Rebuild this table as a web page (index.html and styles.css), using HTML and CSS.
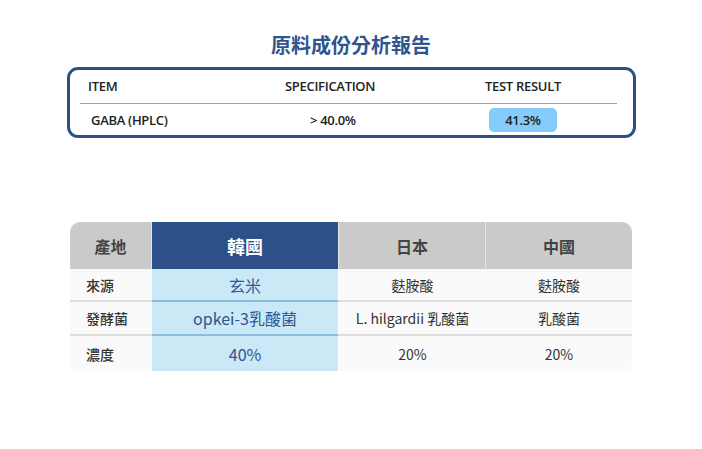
FILE: index.html
```html
<!DOCTYPE html>
<html lang="zh-Hant">
<head>
<meta charset="utf-8">
<link rel="stylesheet" href="styles.css">
</head>
<body>
<div class="page">
  <h1 class="title">原料成份分析報告</h1>
  <div class="report">
    <div class="rrow rhead">
      <div class="c1">ITEM</div>
      <div class="c2">SPECIFICATION</div>
      <div class="c3">TEST RESULT</div>
    </div>
    <div class="rule"></div>
    <div class="rrow rbody">
      <div class="c1">GABA (HPLC)</div>
      <div class="c2">&gt; 40.0%</div>
      <div class="c3"><span class="badge">41.3%</span></div>
    </div>
  </div>

  <div class="compare">
    <div class="cell h first">產地</div>
    <div class="cell h kr">韓國</div>
    <div class="cell h">日本</div>
    <div class="cell h last">中國</div>

    <div class="cell lbl">來源</div>
    <div class="cell krb">玄米</div>
    <div class="cell">麩胺酸</div>
    <div class="cell">麩胺酸</div>

    <div class="cell lbl">發酵菌</div>
    <div class="cell krb">opkei-3乳酸菌</div>
    <div class="cell">L. hilgardii 乳酸菌</div>
    <div class="cell">乳酸菌</div>

    <div class="cell lbl end">濃度</div>
    <div class="cell krb end">40%</div>
    <div class="cell end">20%</div>
    <div class="cell end">20%</div>
  </div>
</div>
</body>
</html>
```
FILE: styles.css
```css
html, body { margin: 0; padding: 0; background: #fff; }
body { width: 702px; height: 449px; overflow: hidden; font-family: "Noto Sans CJK TC", "Noto Sans", sans-serif; }
.page { display: flex; flex-direction: column; align-items: flex-start; }
.title {
  margin: 32px 0 0 0; width: 702px; text-align: center;
  font-size: 20px; line-height: 26px; font-weight: 700; color: #2f5590;
}
.report {
  margin: 9px 0 0 67px; width: 563px; height: 65px;
  border: 3px solid #2f4e86; border-radius: 11px;
  display: flex; flex-direction: column;
  font-family: "Open Sans", "Noto Sans", sans-serif; color: #222; letter-spacing: -0.3px;
  font-weight: 600;
}
.rrow { display: flex; align-items: center; }
.rhead { height: 33px; font-size: 13px; }
.rhead .c1 { padding-left: 18px; width: 197px; }
.rhead .c2 { width: 200px; }
.rule { margin: 0 16px 0 10px; height: 2px; background: #a0a0a0; }
.rbody { height: 30px; font-size: 13px; padding-top: 1px; }
.rbody .c1 { padding-left: 21px; width: 219px; }
.rbody .c2 { width: 179px; }
.badge {
  display: inline-block; width: 68px; height: 24px; line-height: 24px; text-align: center;
  background: #85ccfb; border-radius: 5px;
}
.compare {
  margin: 84px 0 0 70px;
  display: grid; grid-template-columns: 82px 187px 147px 146px;
  grid-template-rows: 47px 33px 34px 35px;
  border-radius: 10px; overflow: hidden;
  background: #fafafa;
}
.cell {
  display: flex; align-items: center; justify-content: center;
  font-size: 14px; color: #333; background: #fafafa;
  border-bottom: 2px solid #dedede;
}
.cell.end { border-bottom: none; }
.cell.h {
  background: #cacaca; font-size: 16px; font-weight: 700; color: #444;
  border-bottom: none; border-right: 1px solid #e6e6e6;
}
.cell.h.last { border-right: none; }
.cell.h.kr { background: #2e5089; color: #fff; font-size: 18px; }
.cell.lbl { justify-content: flex-start; padding-left: 16px; font-size: 14px; font-weight: 500; }
.cell.krb {
  background: #cbe8f6; color: #2f5590; font-size: 16px;
  border-bottom-color: #88bedb; border-right: 1px solid #ffffff;
}
.cell.krb.end { border-bottom: none; }
```
